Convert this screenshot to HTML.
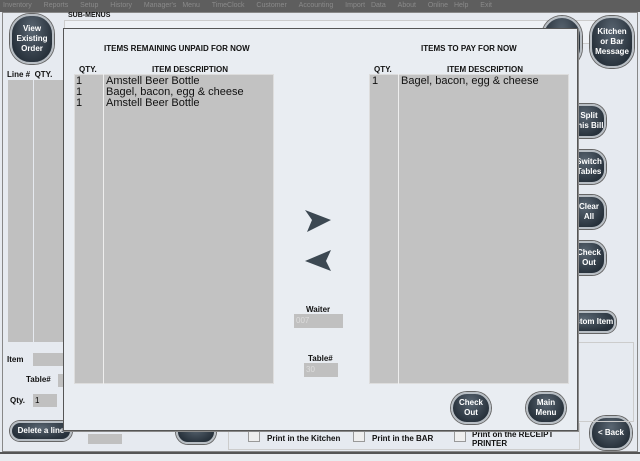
<!DOCTYPE html><html><head><style>
*{box-sizing:border-box;margin:0;padding:0}
body{width:640px;height:461px;position:relative;overflow:hidden;background:#e6eaf0;font-family:"Liberation Sans",sans-serif;}
.a{position:absolute}
.b{font-weight:bold;font-size:8px;color:#111}
.btn{position:absolute;background:radial-gradient(ellipse at 50% 30%,#5a6672,#27313b 75%);border:2px solid #b8bec4;box-shadow:0 0 0 1px #666;border-radius:14px;color:#fff;font-size:8px;font-weight:bold;text-align:center;display:flex;align-items:center;justify-content:center;line-height:10px}
.gray{background:#c0c0c0}
.li{font-size:11px;color:#111;line-height:11px}
</style></head><body>
<div class="a" style="left:0;top:0;width:640px;height:12px;background:#5e5e5e;color:#8a8a8a;font-size:7px;padding:2px 3px;white-space:nowrap;word-spacing:4px">Inventory &nbsp;Reports &nbsp;Setup &nbsp;History &nbsp;Manager's Menu &nbsp;TimeClock &nbsp;Customer &nbsp;Accounting &nbsp;Import Data &nbsp;About &nbsp;Online Help &nbsp;Exit</div>
<div class="a" style="left:2px;top:12px;width:636px;height:440px;border:1px solid #888"></div>
<div class="a" style="left:0;top:452px;width:640px;height:9px;background:#e9ecf0;border-top:2px solid #555"></div>
<div class="a" style="left:64px;top:20px;width:548px;height:24px;border:1px solid #ccc;background:#eef1f5"></div>
<div class="a b" style="left:68px;top:12px;font-size:7px">SUB-MENUS</div>
<div class="btn" style="left:10px;top:14px;width:44px;height:50px;border-radius:20px">View<br>Existing<br>Order</div>
<div class="btn" style="left:590px;top:16px;width:44px;height:52px;border-radius:20px">Kitchen<br>or Bar<br>Message</div>
<div class="btn" style="left:542px;top:16px;width:40px;height:52px;border-radius:20px"></div>
<div class="a b" style="left:7px;top:70px">Line # &nbsp;QTY.</div>
<div class="a gray" style="left:8px;top:80px;width:25px;height:262px"></div>
<div class="a gray" style="left:34px;top:80px;width:30px;height:262px"></div>
<div class="a b" style="left:7px;top:355px">Item</div>
<div class="a gray" style="left:33px;top:353px;width:31px;height:13px"></div>
<div class="a b" style="left:26px;top:375px">Table#</div>
<div class="a gray" style="left:58px;top:374px;width:6px;height:13px"></div>
<div class="a b" style="left:10px;top:396px">Qty.</div>
<div class="a gray" style="left:33px;top:394px;width:24px;height:13px;font-size:8px;padding:2px">1</div>
<div class="btn" style="left:10px;top:421px;width:62px;height:20px;border-radius:10px">Delete a line</div>
<div class="a gray" style="left:88px;top:434px;width:34px;height:10px"></div>
<div class="btn" style="left:176px;top:420px;width:40px;height:24px;border-radius:12px"></div>
<div class="a" style="left:228px;top:423px;width:352px;height:27px;border:1px solid #ccc"></div>
<div class="a" style="left:248px;top:430px;width:12px;height:12px;border:1px solid #999;background:#eee"></div>
<div class="a b" style="left:267px;top:434px">Print in the Kitchen</div>
<div class="a" style="left:353px;top:430px;width:12px;height:12px;border:1px solid #999;background:#eee"></div>
<div class="a b" style="left:372px;top:434px">Print in the BAR</div>
<div class="a" style="left:454px;top:430px;width:12px;height:12px;border:1px solid #999;background:#eee"></div>
<div class="a b" style="left:472px;top:430px;line-height:9px">Print on the RECEIPT<br>PRINTER</div>
<div class="btn" style="left:590px;top:416px;width:42px;height:34px;border-radius:16px">&lt; Back</div>
<div class="a" style="left:564px;top:342px;width:70px;height:80px;border:1px solid #ccc"></div>
<div class="btn" style="left:564px;top:104px;width:42px;height:34px;padding-left:8px">Split<br>this Bill</div>
<div class="btn" style="left:564px;top:150px;width:42px;height:34px;padding-left:8px">Switch<br>Tables</div>
<div class="btn" style="left:564px;top:195px;width:42px;height:34px;padding-left:8px">Clear<br>All</div>
<div class="btn" style="left:564px;top:241px;width:42px;height:34px;padding-left:8px">Check<br>Out</div>
<div class="btn" style="left:552px;top:311px;width:64px;height:22px;border-radius:10px;padding-left:10px;white-space:nowrap">Custom Item</div>
<!-- dialog -->
<div class="a" style="left:63px;top:28px;width:515px;height:403px;background:#e9edf2;border:1px solid #555;box-shadow:1px 1px 0 #888"></div>
<div class="a b" style="left:104px;top:44px">ITEMS REMAINING UNPAID FOR NOW</div>
<div class="a b" style="left:421px;top:44px">ITEMS TO PAY FOR NOW</div>
<div class="a b" style="left:79px;top:65px">QTY.</div>
<div class="a b" style="left:152px;top:65px">ITEM DESCRIPTION</div>
<div class="a b" style="left:374px;top:65px">QTY.</div>
<div class="a b" style="left:447px;top:65px">ITEM DESCRIPTION</div>
<div class="a" style="left:74px;top:74px;width:200px;height:310px;background:#c2c2c2;border:1px solid #ddd"></div>
<div class="a" style="left:103px;top:74px;width:1px;height:310px;background:#eee"></div>
<div class="a li" style="left:76px;top:76px">1<br>1<br>1</div>
<div class="a li" style="left:106px;top:76px">Amstell Beer Bottle<br>Bagel, bacon, egg &amp; cheese<br>Amstell Beer Bottle</div>
<div class="a" style="left:369px;top:74px;width:200px;height:310px;background:#c2c2c2;border:1px solid #ddd"></div>
<div class="a" style="left:398px;top:74px;width:1px;height:310px;background:#eee"></div>
<div class="a li" style="left:372px;top:76px">1</div>
<div class="a li" style="left:401px;top:76px">Bagel, bacon, egg &amp; cheese</div>
<svg class="a" style="left:300px;top:205px" width="40" height="70"><path d="M5 5 L31 15 L7 27 L12 15Z" fill="#3c4852"/><path d="M31 45 L5 56 L31 66 L26 56Z" fill="#3c4852"/></svg>
<div class="a b" style="left:306px;top:305px">Waiter</div>
<div class="a gray" style="left:294px;top:314px;width:49px;height:14px;font-size:8px;color:#ddd;padding:2px">007</div>
<div class="a b" style="left:308px;top:354px">Table#</div>
<div class="a gray" style="left:304px;top:363px;width:34px;height:14px;font-size:8px;color:#ddd;padding:2px">30</div>
<div class="btn" style="left:451px;top:392px;width:40px;height:32px;border-radius:16px">Check<br>Out</div>
<div class="btn" style="left:526px;top:392px;width:40px;height:32px;border-radius:16px">Main<br>Menu</div>
</body></html>
